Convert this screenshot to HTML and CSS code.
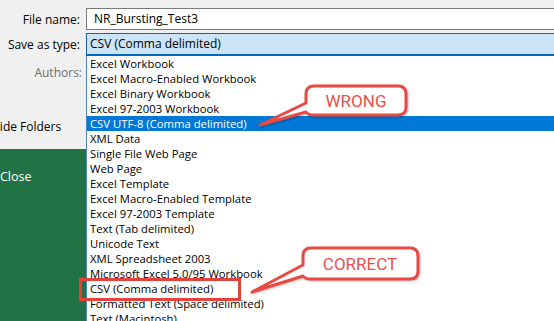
FILE: index.html
```html
<!DOCTYPE html>
<html lang="en">
<head>
  <meta charset="UTF-8">
  <title>Save As - file type</title>
  <link rel="stylesheet" href="styles.css">
</head>
<body>

<div class="dialog">
  <div class="field-row">
    <label class="field-label">File name:</label>
    <div class="name-input">NR_Bursting_Test3</div>
  </div>
  <div class="field-row type-row">
    <label class="field-label">Save as type:</label>
    <div class="type-select">CSV (Comma delimited)</div>
  </div>

  <div class="lower">
    <div class="side">
      <div class="side-top">
        <div class="authors">Authors:</div>
        <div class="folders"><span>Hide Folders</span></div>
      </div>
      <div class="backstage">
        <div class="close">Close</div>
      </div>
    </div>

    <ul class="type-list">
      <li>Excel Workbook</li>
      <li>Excel Macro-Enabled Workbook</li>
      <li>Excel Binary Workbook</li>
      <li>Excel 97-2003 Workbook</li>
      <li class="selected">CSV UTF-8 (Comma delimited)</li>
      <li>XML Data</li>
      <li>Single File Web Page</li>
      <li>Web Page</li>
      <li>Excel Template</li>
      <li>Excel Macro-Enabled Template</li>
      <li>Excel 97-2003 Template</li>
      <li>Text (Tab delimited)</li>
      <li>Unicode Text</li>
      <li>XML Spreadsheet 2003</li>
      <li>Microsoft Excel 5.0/95 Workbook</li>
      <li>CSV (Comma delimited)</li>
      <li>Formatted Text (Space delimited)</li>
      <li>Text (Macintosh)</li>
    </ul>
  </div>
</div>

<!-- annotations drawn over the screenshot -->
<svg class="notes" width="554" height="321" viewBox="0 0 554 321">
  <rect class="mark" x="80.5" y="279.5" width="159" height="20"/>
  <path class="bubble" d="M314 86 H398 Q406 86 406 94 V107 Q406 115 398 115 H314 Q308 115 306 112 L260 125 L306 103 V94 Q306 86 314 86 Z"/>
  <text class="bubble-text" x="356" y="107">WRONG</text>
  <path class="bubble" d="M311 248 H410 Q418 248 418 256 V271 Q418 279 410 279 H311 Q305 279 303 276 L252 292 L303 265 V256 Q303 248 311 248 Z"/>
  <text class="bubble-text" x="360" y="270">CORRECT</text>
</svg>

</body>
</html>
```

FILE: styles.css
```css
body {
  margin: 0;
  width: 554px;
  height: 321px;
  overflow: hidden;
  position: relative;
  background-color: #f0f0f0;
  font-family: "Open Sans", "Noto Sans", sans-serif;
  font-size: 11.3px;
  color: #000;
}
.dialog {
  padding-top: 8px;
  display: flex;
  flex-direction: column;
  height: 313px;
}
.field-row {
  display: flex;
  align-items: stretch;
}
.type-row {
  margin-top: 3px;
}
.field-label {
  width: 80px;
  padding-right: 6px;
  text-align: right;
  display: flex;
  align-items: center;
  justify-content: flex-end;
  box-sizing: border-box;
  flex: 0 0 86px;
  font-size: 12px;
}
.name-input {
  flex: 1;
  height: 20px;
  line-height: 20px;
  background-color: #fff;
  border: 1px solid #7a7a7a;
  border-right: none;
  padding-left: 7px;
  font-size: 12px;
}
.type-select {
  flex: 1;
  height: 20px;
  line-height: 20px;
  background-color: #cce4f7;
  border-top: 1px solid #1f5fa8;
  border-left: 1px solid #1f5fa8;
  border-bottom: 2px solid #0067c0;
  padding-left: 3px;
  font-size: 12px;
}
.lower {
  flex: 1;
  display: flex;
  min-height: 0;
}
.side {
  flex: 0 0 86px;
  display: flex;
  flex-direction: column;
}
.side-top {
  height: 93px;
}
.authors {
  text-align: right;
  padding-right: 4px;
  margin-top: 8px;
  color: #6d6d6d;
  font-size: 12px;
}
.folders {
  margin-top: 37px;
  overflow: hidden;
  white-space: nowrap;
  font-size: 12px;
}
.folders span {
  display: inline-block;
  margin-left: -9px;
}
.backstage {
  flex: 1;
  background-color: #217346;
  color: #fff;
}
.close {
  margin-top: 19px;
  font-size: 12.5px;
}
.type-list {
  flex: 1;
  list-style: none;
  margin: 0;
  padding: 0;
  background-color: #fff;
  border-left: 1px solid #4a86c8;
}
.type-list li {
  height: 15px;
  line-height: 15px;
  padding-left: 3px;
  white-space: nowrap;
}
.type-list li.selected {
  background-color: #0078d7;
  color: #fff;
}
.notes {
  position: absolute;
  left: 0;
  top: 0;
}
.mark {
  fill: none;
  stroke: #e8413b;
  stroke-width: 3;
}
.bubble {
  fill: #fff;
  stroke: #e84a43;
  stroke-width: 3;
  stroke-linejoin: round;
  filter: drop-shadow(1px 1px 1px rgba(0, 0, 0, 0.25));
}
.bubble-text {
  fill: #e8504a;
  font-family: Roboto, "Liberation Sans", sans-serif;
  font-size: 17px;
  text-anchor: middle;
}
```
